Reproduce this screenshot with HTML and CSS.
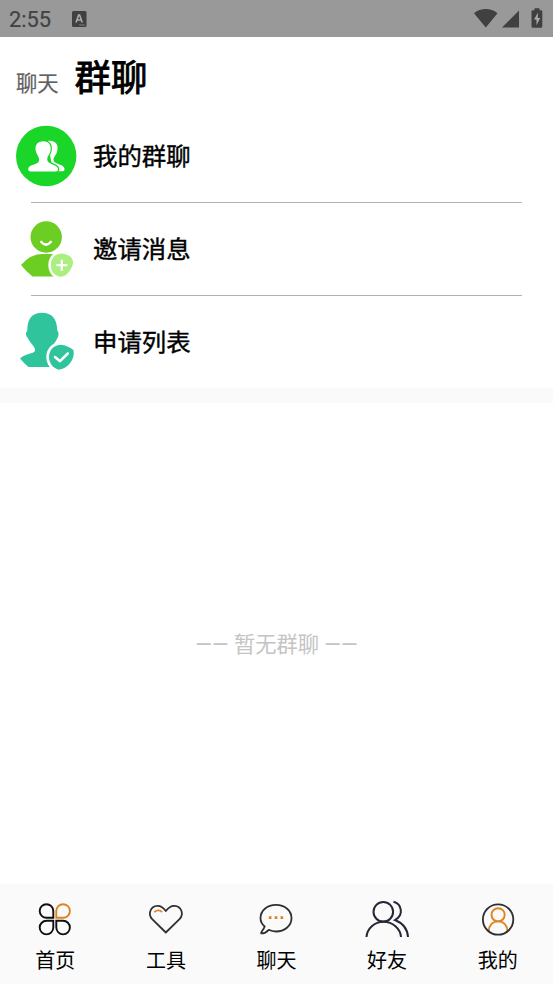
FILE: index.html
```html
<!DOCTYPE html>
<html lang="zh-CN">
<head>
<meta charset="utf-8">
<title>群聊</title>
<link rel="stylesheet" href="styles.css">
</head>
<body>
<header class="status">
  <span class="time">2:55</span>
  <svg class="input-icon" width="15" height="16" viewBox="0 0 15 16"><rect width="14.5" height="16" rx="1.5" fill="#404040"/><path d="M4 11.5 6.6 4h1L10.2 11.5M5 9h4.2" fill="none" stroke="#aaa" stroke-width="1.6"/><path d="M7.5 14h1m1 0h1m1 0h1" stroke="#bbb"/></svg>
  <svg class="system-icons" width="72" height="22" viewBox="472 8 72 22" fill="#404040"><path d="M474 13.2C480.500 7.700 491 7.700 497.500 13.200L485.800 27.500ZM502 27.500 519 10.500V27.500ZM533 10.300H534.500V8.300H539.500V10.300H541Q542.300 10.300 542.300 11.600V26.400Q542.300 27.700 541 27.700H533Q531.500 27.700 531.500 26.400V11.600Q531.500 10.300 533 10.300Z"/><path d="M538 12.500 534 19.500H536.500V25.200L540.200 18H537.700Z" fill="#aaa"/></svg>
</header>
<nav class="tabs"><a class="tab">聊天</a><a class="tab active">群聊</a></nav>
<main>
  <ul class="menu">
    <li class="row">
      <svg width="62" height="62" viewBox="15 125 62 62"><circle cx="46.200" cy="156" r="30.200" fill="#19d629"/><g fill="#fff"><path d="M47.500 141C54 139.500 58.500 143.500 57.500 149.500C57 154 54.500 156 53.600 158.500C53 162 55 162.700 60 164.700C64 166 64.800 168 64.500 170Q64 171.200 62 171.200H53Z"/><path d="M43.200 141.200C49 141.200 51.500 145.500 50.500 150.500C49.800 154.500 47.300 156 47.300 159.200C47.300 162 49 163 54.500 165.200C57.500 166.300 58.200 168.500 58 170Q57.500 171.500 56 171.500H30.500Q28 171.500 28.200 168.800C28.500 166.400 30.500 165.700 34 164.500C38.500 162.800 39.500 161.500 39 158.500C38.500 156 36.400 154.500 35.700 150.500C34.800 145 37.500 141.200 43.200 141.200Z" stroke="#19d629" stroke-width="2.400" paint-order="stroke"/></g></svg>
      <span>我的群聊</span>
    </li>
    <li class="row">
      <svg width="62" height="62" viewBox="15 218 62 62"><circle cx="46.200" cy="237" r="15.700" fill="#6ccd22"/><path d="M41.300 242Q46 247.300 50.700 242" fill="none" stroke="#fff" stroke-width="2.600" stroke-linecap="round"/><path d="M21 265Q30.500 254 42 254H56V276.500H32.500Q26 271.500 21 265Z" fill="#6ccd22"/><path d="M61.300 253.500C67 253.500 73 257 73 262.500C73 267.500 67 276.700 61.300 276.700C55 276.700 50.800 271.500 50.800 265S55 253.500 61.300 253.500Z" fill="#abef80" stroke="#fff" stroke-width="5" paint-order="stroke"/><path d="M56.300 265.200H67.300M61.800 259.700V270.700" stroke="#fff" stroke-width="2.200"/></svg>
      <span>邀请消息</span>
    </li>
    <li class="row">
      <svg width="62" height="62" viewBox="15 311 62 62"><path d="M42 312.800C52 312.800 57 319 57.300 330.500C59.500 333 58.500 336 57 339C55 343.500 50.800 346.500 50.500 349.500Q50.500 352 54 353V366.900H28.500Q24 363.500 20 358.500C27 352.200 35 354.500 35 350C35 346.500 31 344 28 338.500C25.500 335.500 25.300 333 27.300 330.500C27.300 319 32 312.800 42 312.800Z" fill="#30c49d"/><path d="M61.300 344.700C65 345 70 347 73.300 350C75.500 357.500 69 368.500 59 369.700C53 368.500 49 363 49 357C49 349.500 54 345 61.300 344.700Z" fill="#30c49d" stroke="#fff" stroke-width="5.400" paint-order="stroke"/><path d="M55 357 60 361.200 67.800 353.500" fill="none" stroke="#fff" stroke-width="2.500" stroke-linecap="round" stroke-linejoin="round"/></svg>
      <span>申请列表</span>
    </li>
  </ul>
  <section class="empty">—— 暂无群聊 ——</section>
</main>
<footer class="nav">
  <a class="item"><svg width="44" height="40" viewBox="33.500 899 44 40" fill="none" stroke="#101010" stroke-width="1.900"><path d="M53.800 917.800H47A6.800 6.800 0 1 1 53.800 911ZM53.800 920.800H47A6.800 6.800 0 1 0 53.800 927.600ZM56.800 920.800H63.600A6.800 6.800 0 1 1 56.800 927.600Z"/><path d="M56.800 917.800H63.600A6.800 6.800 0 1 0 56.800 911Z" stroke="#df841c"/></svg><span>首页</span></a>
  <a class="item"><svg width="44" height="40" viewBox="144 899 44 40" fill="none" stroke="#303033" stroke-width="1.800" stroke-linejoin="round"><path d="M165.800 932.500 152.200 919.200C147.500 914.200 150.500 906 157.200 905.800C161 905.600 163.800 908 165.800 911C168 908 170.500 905.600 174.500 905.800C181.500 906 184.200 914.200 179.500 919.200Z"/><path d="M154.300 912Q158.500 908.700 162.200 912" stroke="#df841c" stroke-width="1.800"/></svg><span>工具</span></a>
  <a class="item"><svg width="44" height="40" viewBox="254.500 899 44 40" fill="none" stroke="#303033" stroke-width="1.800" stroke-linejoin="round"><path d="M265.200 926.500C262.300 924 261 921.300 261 918.200C261 910.600 267.500 904.900 276.500 904.900S292 910.600 292 918.200S285 931.500 276.500 931.500Q272.500 931.500 269.300 929.800Q265.500 933.700 261.700 933.400Q261.300 933 262.400 931.200Q264.600 928.500 265.200 926.500Z"/><path d="M269.400 917.600h2.600m3.200 0h2.600m3.200 0h2.600" stroke="#df841c" stroke-width="2.600"/></svg><span>聊天</span></a>
  <a class="item"><svg width="44" height="40" viewBox="365 899 44 40" fill="none" stroke="#252638" stroke-width="2"><circle cx="383.300" cy="911.800" r="9.800"/><path d="M366.500 937C367 928.500 374.500 921.700 383.500 921.700S400.500 928.500 401 937M393.500 901.800C402 904 404 915 395 920C402.500 923 407.500 929 408 937"/></svg><span>好友</span></a>
  <a class="item"><svg width="44" height="40" viewBox="475.500 899 44 40" fill="none"><g stroke="#df841c" stroke-width="1.900"><circle cx="497.600" cy="914.800" r="6.600"/><path d="M488.300 931C488.300 925.500 492 921.400 497.600 921.400S506.900 925.500 506.900 931"/></g><circle cx="497.600" cy="919.500" r="15.200" stroke="#2d2e33" stroke-width="1.800"/></svg><span>我的</span></a>
</footer>
</body>
</html>
```

FILE: styles.css
```css
* { box-sizing: border-box; }
body {
  margin: 0;
  height: 984px;
  display: flex;
  flex-direction: column;
  overflow: hidden;
  background: #fff;
  color: #000;
  font-family: "Noto Sans CJK SC", sans-serif;
}
svg { display: block; flex-shrink: 0; }
.status {
  height: 37px;
  flex-shrink: 0;
  display: flex;
  align-items: center;
  padding: 1px 9px 0;
  background: #999;
}
.time {
  width: 63px;
  padding-top: 2px;
  font: 400 21.8px/24px Roboto, sans-serif;
  color: #424242;
  -webkit-text-stroke: 0.2px #424242;
}
.system-icons { margin-left: auto; }
.tabs {
  height: 73px;
  flex-shrink: 0;
  display: flex;
  align-items: baseline;
  gap: 16px;
  padding: 13px 16px 0;
}
.tab {
  font-size: 21.3px;
  line-height: 52px;
  color: #606060;
  -webkit-text-stroke: 0.2px #606060;
}
.tab.active {
  font-size: 36.5px;
  color: #000;
  -webkit-text-stroke: 0.9px #000;
}
main { flex: 1; display: flex; flex-direction: column; }
.menu {
  margin: 0;
  padding: 0;
  list-style: none;
  border-bottom: 15px solid #fafafa;
}
.row {
  height: 93px;
  display: flex;
  align-items: center;
  gap: 16px;
  padding: 0 15px 1px;
  font-size: 24.4px;
  line-height: 36px;
  -webkit-text-stroke: 0.4px #000;
  background: linear-gradient(#b2b2b2, #b2b2b2) 31px 100% / 491px 1px no-repeat;
}
.row span { margin-top: -2px; }
.row:last-child { height: 92px; padding-bottom: 0; background: none; }
.empty {
  flex: 1;
  display: flex;
  align-items: center;
  justify-content: center;
  padding-bottom: 3px;
  font-family: Roboto, "Noto Sans CJK SC", sans-serif;
  font-size: 21.3px;
  color: #c4c4c4;
}
.nav {
  height: 100px;
  flex-shrink: 0;
  display: grid;
  grid-template-columns: repeat(5, 1fr);
  background: #fafafa;
}
.item {
  display: flex;
  flex-direction: column;
  align-items: center;
  padding-top: 15px;
  font-size: 20px;
  line-height: 42px;
}
```
